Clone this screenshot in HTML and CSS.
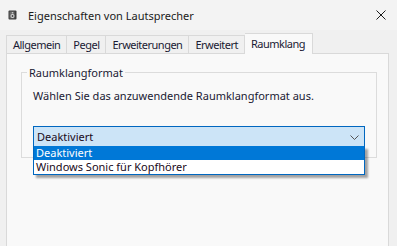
FILE: index.html
```html
<!DOCTYPE html>
<html lang="de">
<head>
<meta charset="utf-8">
<title>Eigenschaften von Lautsprecher</title>
<link rel="stylesheet" href="styles.css">
</head>
<body>
<div class="window">
  <div class="titlebar">
    <svg class="app-icon" width="10" height="10" viewBox="0 0 10 10">
      <rect x="0.5" y="0.5" width="8" height="9" rx="1" fill="#3c3c3c"/>
      <rect x="1.5" y="1.5" width="5" height="7" fill="#6a6a6a"/>
      <circle cx="4.5" cy="6" r="2" fill="#d8d8d8"/>
      <circle cx="4.5" cy="6" r="1" fill="#444"/>
      <circle cx="4.5" cy="2.8" r="0.8" fill="#cfcfcf"/>
    </svg>
    <span class="title">Eigenschaften von Lautsprecher</span>
    <span class="close">
      <svg width="10" height="10" viewBox="0 0 10 10"><path d="M0.5 0.5 L9.5 9.5 M9.5 0.5 L0.5 9.5" stroke="#1a1a1a" stroke-width="1"/></svg>
    </span>
  </div>
  <div class="tabs">
    <div class="tab">Allgemein</div>
    <div class="tab">Pegel</div>
    <div class="tab">Erweiterungen</div>
    <div class="tab">Erweitert</div>
    <div class="tab active">Raumklang</div>
  </div>
  <div class="panel">
    <fieldset class="group">
      <legend>Raumklangformat</legend>
      <p class="desc">Wählen Sie das anzuwendende Raumklangformat aus.</p>
      <div class="combo">
        <div class="combo-box">
          <span>Deaktiviert</span>
          <svg class="chev" width="9" height="5" viewBox="0 0 9 5"><path d="M0.5 0.5 L4.5 4.5 L8.5 0.5" fill="none" stroke="#555" stroke-width="1"/></svg>
        </div>
        <ul class="combo-list">
          <li class="sel">Deaktiviert</li>
          <li>Windows Sonic für Kopfhörer</li>
        </ul>
      </div>
    </fieldset>
  </div>
</div>
</body>
</html>
```
FILE: styles.css
```css
* { box-sizing: border-box; }
html, body {
  margin: 0;
  padding: 0;
}
body {
  width: 397px;
  height: 246px;
  overflow: hidden;
  background: #f0f0f0;
  font-family: "Noto Sans", "Open Sans", sans-serif;
  color: #000;
}
.window {
  display: flex;
  flex-direction: column;
  height: 246px;
}
.titlebar {
  height: 30px;
  flex: 0 0 30px;
  display: flex;
  align-items: center;
  background: #f3f3f3;
  padding-left: 8px;
}
.app-icon { margin-right: 10px; margin-top: -1px; }
.title {
  font-size: 11px;
  color: #1a1a1a;
  flex: 1;
}
.close {
  width: 30px;
  display: flex;
  justify-content: flex-start;
  padding-left: 9px;
}
.tabs {
  display: flex;
  align-items: flex-end;
  padding-left: 6px;
  margin-top: 3px;
  height: 20px;
  position: relative;
  z-index: 1;
}
.tab {
  height: 18px;
  border: 1px solid #d9d9d9;
  border-bottom: none;
  border-right: none;
  padding: 0 6px;
  font-size: 11px;
  letter-spacing: -0.5px;
  line-height: 17px;
  background: #f0f0f0;
  color: #1a1a33;
}
.tab:nth-child(4) { border-right: 1px solid #d9d9d9; }
.tab.active {
  background: #f9f9f9;
  border-right: 1px solid #d9d9d9;
  border-left: none;
  padding: 1px 7px 0 6px;
  height: 21px;
  margin-bottom: -1px;
}
.panel {
  flex: 1;
  margin: 0 8px 0 6px;
  background: #f9f9f9;
  border: 1px solid #d9d9d9;
  border-bottom: none;
  padding: 12px 11px 0 14px;
}
.group {
  margin: 0;
  border: 1px solid #dcdcdc;
  padding: 0 11px 14px 11px;
  height: 92px;
  min-width: 0;
}
.group legend {
  font-size: 11px;
  padding: 0 2px;
  margin-left: -6px;
  line-height: 13px;
  color: #1a1a33;
}
.desc {
  margin: 9px 0 0 0;
  font-size: 11px;
  line-height: 15px;
  color: #1a1a33;
}
.combo {
  position: relative;
  margin-top: 23px;
}
.combo-box {
  height: 21px;
  border: 1px solid #0067c0;
  background: #cce4f7;
  display: flex;
  align-items: center;
  justify-content: space-between;
  padding: 0 5px 0 3px;
  font-size: 11px;
  color: #1a0a1a;
}
.chev { margin-top: 1px; }
.combo-list {
  position: absolute;
  left: 0;
  right: 0;
  top: 20px;
  margin: 0;
  padding: 0;
  list-style: none;
  border: 1px solid #0067c0;
  border-top: none;
  background: #fff;
  box-shadow: 3px 3px 2px rgba(0,0,0,0.35);
  font-size: 11px;
}
.combo-list li {
  height: 14px;
  line-height: 14px;
  padding-left: 2px;
  color: #1a0a1a;
}
.combo-list li.sel {
  background: #0078d7;
  color: #fff;
}
```
